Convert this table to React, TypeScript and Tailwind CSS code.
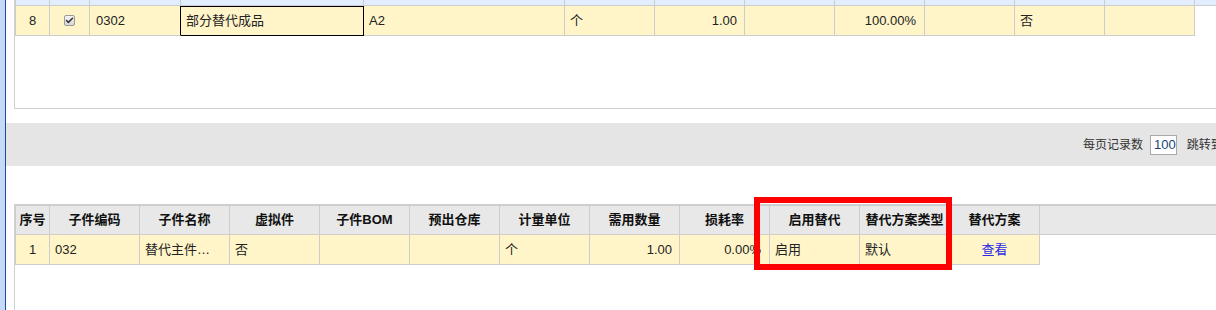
import { Check } from 'lucide-react';

const FONT = { fontFamily: '"Liberation Sans", "Noto Sans CJK SC", sans-serif' };

// top grid widths, each including its right border
const topCols = [35, 40, 91, 183, 201, 90, 90, 90, 90, 90, 90, 90];

const subHeaders = ['序号', '子件编码', '子件名称', '虚拟件', '子件BOM', '预出仓库', '计量单位', '需用数量', '损耗率', '启用替代', '替代方案类型', '替代方案'];

function Cell({ w, first, className = '', children }: { w: number; first?: boolean; className?: string; children?: React.ReactNode }) {
  return (
    <div
      className={`box-border shrink-0 border-r border-[#cdcdcd] flex items-center overflow-hidden whitespace-nowrap ${first ? 'border-l' : ''} ${className}`}
      style={{ width: w }}
    >
      {children}
    </div>
  );
}

function Checkbox() {
  return (
    <div className="w-[11px] h-[11px] rounded-[2px] border border-[#9a9a9a] bg-gradient-to-b from-[#f4f4f4] to-[#d8d8d8] flex items-center justify-center">
      <Check className="w-[9px] h-[9px] text-[#333]" strokeWidth={4} />
    </div>
  );
}

function MainGrid() {
  return (
    <div>
      {/* tail of the header row, scrolled up */}
      <div className="flex h-[6px] border-b border-[#cdcdcd] bg-[#e2eefd]">
        {topCols.map((w, i) => (
          <Cell key={i} w={w} first={i === 0} />
        ))}
      </div>
      <div className="flex h-[30px] text-[13px] text-[#222]">
        <Cell w={35} first className="justify-center border-b bg-[#fff5c9]">8</Cell>
        <Cell w={40} className="justify-center border-b bg-[#fff5c9]">
          <Checkbox />
        </Cell>
        <Cell w={91} className="px-[6px] border-b !border-r-black bg-[#fff5c9]">0302</Cell>
        <Cell w={183} className="px-[5px] border-b border-t !border-black bg-[#fff5c9]">部分替代成品</Cell>
        <Cell w={201} className="px-[5px] border-b bg-[#fff5c9]">A2</Cell>
        <Cell w={90} className="px-[5px] border-b bg-[#fff5c9]">个</Cell>
        <Cell w={90} className="justify-end pr-[7px] border-b bg-[#fff5c9]">1.00</Cell>
        <Cell w={90} className="border-b bg-[#fff5c9]" />
        <Cell w={90} className="justify-end pr-[8px] border-b bg-[#fff5c9]">100.00%</Cell>
        <Cell w={90} className="border-b bg-[#fff5c9]" />
        <Cell w={90} className="px-[5px] border-b bg-[#fff5c9]">否</Cell>
        <Cell w={90} className="border-b bg-[#fff5c9]" />
      </div>
    </div>
  );
}

function SubGrid() {
  const widths = subHeaders.map((_, i) => (i === 0 ? 35 : 90));
  return (
    <div className="relative">
      <div className="flex h-[30px] border-t border-b border-[#cdcdcd] bg-[#e8e8e8] text-[13px] font-bold text-[#111]">
        {subHeaders.map((h, i) => (
          <Cell key={h} w={widths[i]} first={i === 0} className="justify-center">
            {h}
          </Cell>
        ))}
      </div>
      <div className="flex h-[30px] text-[13px] text-[#222]">
        <Cell w={35} first className="justify-center border-b bg-[#fff5c9]">1</Cell>
        <Cell w={90} className="px-[5px] border-b bg-[#fff5c9]">032</Cell>
        <Cell w={90} className="px-[5px] border-b bg-[#fff5c9]">替代主件…</Cell>
        <Cell w={90} className="px-[5px] border-b bg-[#fff5c9]">否</Cell>
        <Cell w={90} className="border-b bg-[#fff5c9]" />
        <Cell w={90} className="border-b bg-[#fff5c9]" />
        <Cell w={90} className="px-[5px] border-b bg-[#fff5c9]">个</Cell>
        <Cell w={90} className="justify-end pr-[7px] border-b bg-[#fff5c9]">1.00</Cell>
        <Cell w={90} className="justify-end pr-[8px] border-b bg-[#fff5c9]">0.00%</Cell>
        <Cell w={90} className="px-[5px] border-b bg-[#fff5c9]">启用</Cell>
        <Cell w={90} className="px-[5px] border-b bg-[#fff5c9]">默认</Cell>
        <Cell w={90} className="justify-center border-b bg-[#fff5c9]">
          <span className="text-[#2a2ae8] cursor-pointer">查看</span>
        </Cell>
      </div>
      {/* highlight frame around the substitution columns */}
      <div className="absolute left-[739px] top-[-8px] w-[198px] h-[73px] border-[6px] border-[#ff0000] pointer-events-none" />
    </div>
  );
}

export default function App() {
  return (
    <div className="flex w-[1216px] h-[310px] overflow-hidden bg-white" style={FONT}>
      <div className="w-[5px] shrink-0 bg-[#c5daf6]" />
      <div className="w-px shrink-0 bg-[#1b4c9f]" />
      <div className="flex-1 min-w-0 flex flex-col">
        <div className="ml-[8px] h-[109px] shrink-0 border-l border-b border-[#d0d0d0]">
          <MainGrid />
        </div>
        <div className="h-[14px] shrink-0" />
        <div className="h-[43px] shrink-0 bg-[#e5e5e5] flex items-center pl-[1077px] whitespace-nowrap overflow-hidden text-[12px] text-[#333]">
          <span>每页记录数</span>
          <div className="ml-[7px] w-[30px] h-[20px] box-border border border-[#a9a9a9] bg-white flex items-center pl-[3px] text-[13px] text-[#1a3f7a]">
            100
          </div>
          <span className="ml-[10px]">跳转到</span>
        </div>
        <div className="h-[38px] shrink-0" />
        <div className="ml-[8px] flex-1 border-l border-t border-[#d0d0d0]">
          <SubGrid />
        </div>
      </div>
    </div>
  );
}
